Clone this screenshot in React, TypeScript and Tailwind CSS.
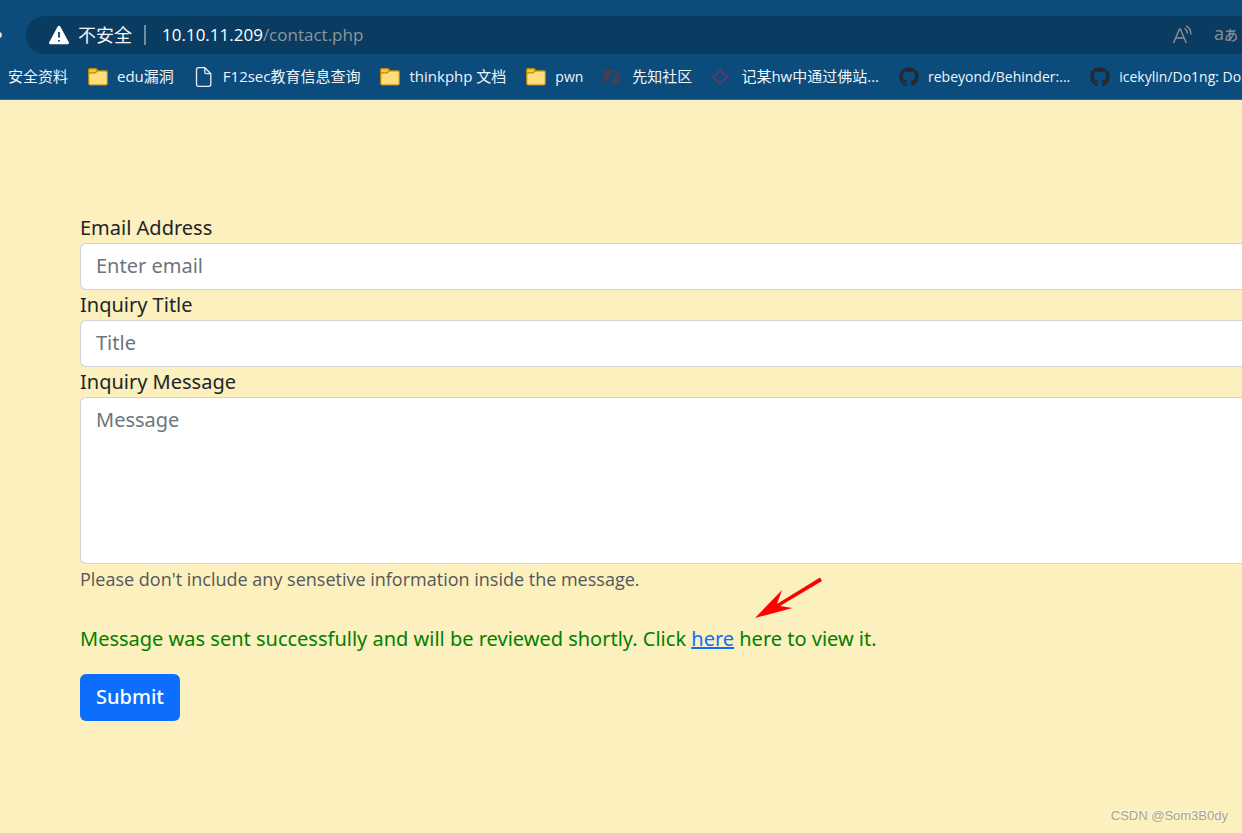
import type { ReactNode } from "react";
import { FaGithub } from "react-icons/fa";

function FolderIcon() {
  return (
    <svg viewBox="0 0 20 20" className="size-5 shrink-0" aria-hidden="true">
      <path
        d="M.7 3.2c0-.9.5-1.5 1.4-1.5h5.2c.6 0 1 .2 1.3.6l1.1 1.5h8.2c.8 0 1.4.6 1.4 1.4v11.4c0 .8-.6 1.4-1.4 1.4H2.1c-.8 0-1.4-.6-1.4-1.4z"
        fill="#ffdd7c"
        stroke="#b88a0c"
        strokeWidth="1.2"
      />
      <path
        d="M.7 3.2c0-.9.5-1.5 1.4-1.5h5.2c.6 0 1 .2 1.3.6l.9 1.2-1.6 1.8c-.3.4-.7.5-1.2.5H.7z"
        fill="#fcc934"
        stroke="#b88a0c"
        strokeWidth="1.2"
      />
    </svg>
  );
}

function FileIcon() {
  return (
    <svg viewBox="0 0 20 20" className="size-5 shrink-0" fill="none" stroke="#e9eff4" strokeWidth="1.3" strokeLinejoin="round" aria-hidden="true">
      <path d="M4.5.7h6.3l6 6v10.6a2 2 0 0 1-2 2H4.5a2 2 0 0 1-2-2V2.7a2 2 0 0 1 2-2z" />
      <path d="M10.8.7v4.5a1.5 1.5 0 0 0 1.5 1.5h4.5" />
    </svg>
  );
}

function SlashIcon() {
  return (
    <svg viewBox="0 0 20 20" className="size-5 shrink-0" fill="#414251" aria-hidden="true">
      <path d="M1 3h11L1 17.500z" />
      <path d="M16.500 3v13.500h-10z" />
    </svg>
  );
}

function DiamondIcon() {
  return (
    <svg viewBox="0 0 20 20" className="size-5 shrink-0" fill="none" aria-hidden="true">
      <path d="M10 5l3-2 7 7-7 7-3-2 5-5z" fill="#1a4389" />
      <path d="M8 3l7 7-7 7-7-7z" stroke="#843052" strokeWidth="1.2" />
    </svg>
  );
}

function GithubIcon() {
  return <FaGithub className="size-5 shrink-0 text-[#24292f]" aria-hidden="true" />;
}

const bookmarks: { title: string; icon?: ReactNode; size: string }[] = [
  { title: "安全资料", size: "text-[15px]" },
  { title: "edu漏洞", icon: <FolderIcon />, size: "text-[15px]" },
  { title: "F12sec教育信息查询", icon: <FileIcon />, size: "text-[15px]" },
  { title: "thinkphp 文档", icon: <FolderIcon />, size: "text-[15px]" },
  { title: "pwn", icon: <FolderIcon />, size: "text-sm" },
  { title: "先知社区", icon: <SlashIcon />, size: "text-[15px]" },
  { title: "记某hw中通过佛站...", icon: <DiamondIcon />, size: "text-[15px]" },
  { title: "rebeyond/Behinder:...", icon: <GithubIcon />, size: "text-sm" },
  { title: "icekylin/Do1ng: Do", icon: <GithubIcon />, size: "text-sm" },
];

function BrowserBar() {
  return (
    <header className="overflow-hidden border-b border-[#2f6a97] bg-[#0c4c7c] pt-4 font-['Open_Sans','Noto_Sans_CJK_SC',sans-serif]">
      <div className="flex items-center">
        <span className="-ml-1 mr-6 size-1.5 rounded-full bg-[#d5e0e8]" />
        <div className="flex h-[38px] flex-1 items-center rounded-l-full bg-[#0a3b60] pl-[22px] pr-1">
          <svg viewBox="0 0 22 20" className="h-5 w-[22px] shrink-0" aria-hidden="true">
            <path d="M9.700 1.400a1.500 1.500 0 0 1 2.600 0l8.500 15.800a1.400 1.400 0 0 1-1.200 2.100H2.400a1.400 1.400 0 0 1-1.200-2.100z" fill="#fff" />
            <path d="M11 7v5.500M11 15v1.600" stroke="#0a3b60" strokeWidth="1.800" />
          </svg>
          <span className="ml-2 text-lg text-[#f3f6f8]">不安全</span>
          <span className="ml-3 h-5 w-0.5 bg-[#6f8ba1]" />
          <span className="ml-4 flex-1 text-[17px] text-white">
            10.10.11.209<span className="text-[#8e969c]">/contact.php</span>
          </span>
          <button type="button" aria-label="Read aloud" className="mr-5">
            <svg viewBox="0 0 22 20" className="h-5 w-[22px]" fill="none" stroke="#8a8f93" strokeWidth="1.400" aria-hidden="true">
              <path d="M1.500 18 7.500 4h.8L14.300 18M3.800 13h8" />
              <path d="M12.500 3.500c1.800 1 2.800 2.700 2.900 5M14 .9c3.200 1.600 5 4.500 5 8.600" />
            </svg>
          </button>
          <button type="button" aria-label="Translate" className="flex items-baseline pb-0.5 text-[#8a8f93]">
            <span className="text-lg leading-5">a</span>
            <span className="text-sm leading-5 font-medium">あ</span>
          </button>
        </div>
      </div>
      <nav className="flex h-[45px] items-center gap-5 pl-2 whitespace-nowrap text-[#f0f5f8]">
        {bookmarks.map((b) => (
          <a key={b.title} href="#" className={`flex shrink-0 items-center gap-[9px] ${b.size}`}>
            {b.icon}
            {b.title}
          </a>
        ))}
      </nav>
    </header>
  );
}

const fieldClass =
  "block w-full rounded-l-md border border-r-0 border-[#ced4da] bg-white px-[15px] pt-[7px] pb-[9px] leading-[30px] text-[#212529] placeholder:text-[#6c757d]";

function ContactForm() {
  return (
    <form
      className="pt-[113px] pl-20 font-['Noto_Sans',sans-serif] text-xl leading-[30px] text-[#212529]"
      onSubmit={(e) => e.preventDefault()}
    >
      <label htmlFor="email" className="block">
        Email Address
      </label>
      <input id="email" type="email" placeholder="Enter email" className={`${fieldClass} h-[47px]`} />
      <label htmlFor="title" className="block">
        Inquiry Title
      </label>
      <input id="title" type="text" placeholder="Title" className={`${fieldClass} h-[47px]`} />
      <label htmlFor="message" className="block">
        Inquiry Message
      </label>
      <textarea id="message" placeholder="Message" className={`${fieldClass} h-[167px] resize-none`} />
      <small className="block font-['Open_Sans',sans-serif] text-lg leading-[30px] text-[#55575a]">
        Please don't include any sensetive information inside the message.
      </small>
      <p className="mt-[30px] mb-5 text-[#008000]">
        Message was sent successfully and will be reviewed shortly. Click{" "}
        <span className="relative">
          <a href="#" className="text-[#0d6efd] underline">
            here
          </a>
          <svg viewBox="0 0 68 42" className="absolute bottom-full left-16 mb-1.5 h-[42px] w-[68px]" aria-hidden="true">
            <path d="M0 41 27 13 22 27 65 .5 67 4 25 29 37.500 31z" fill="#f00" />
          </svg>
        </span>{" "}
        here to view it.
      </p>
      <button type="submit" className="h-[47px] rounded-md bg-[#0d6efd] px-4 pb-0.5 font-medium text-white">
        Submit
      </button>
    </form>
  );
}

export default function App() {
  return (
    <div className="flex min-h-screen flex-col bg-[#fbf0be]">
      <BrowserBar />
      <main className="flex-1">
        <ContactForm />
      </main>
      <footer className="pr-[14px] pb-[7px] text-right font-['Liberation_Sans',Arial,sans-serif] text-[13px] leading-5 text-[#aaa58c] [text-shadow:-1px_-1px_0_#fffbe6]">
        CSDN @Som3B0dy
      </footer>
    </div>
  );
}
